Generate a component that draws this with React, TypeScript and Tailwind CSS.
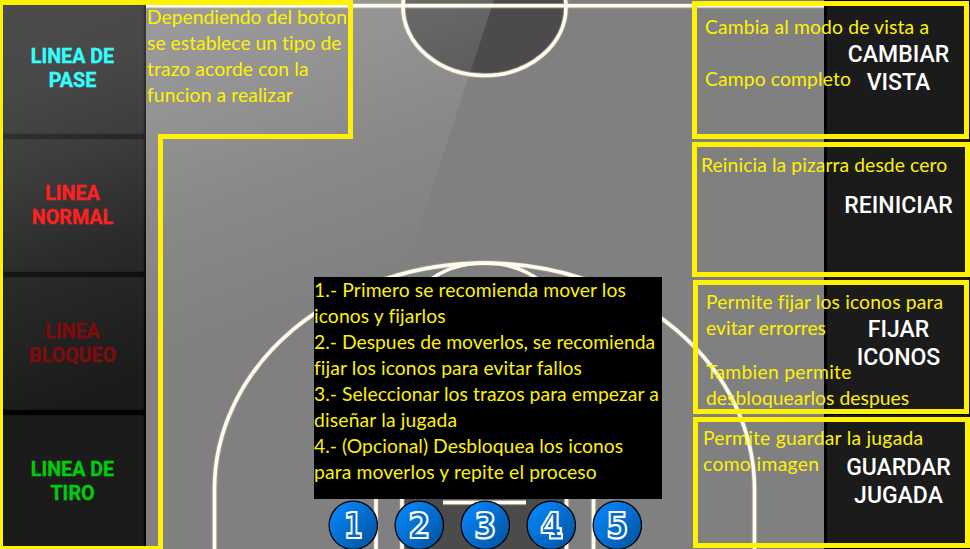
import React from "react";

const ROBOTO = "font-['Roboto',sans-serif]";

const modes = [
  { lines: ["LINEA DE", "PASE"], color: "text-[#33ffff]" },
  { lines: ["LINEA", "NORMAL"], color: "text-[#ff2020]" },
  { lines: ["LINEA", "BLOQUEO"], color: "text-[#7e0c0e]" },
  { lines: ["LINEA DE", "TIRO"], color: "text-[#00cc0a]" },
];

const actions = [
  ["CAMBIAR", "VISTA"],
  ["REINICIAR"],
  ["FIJAR", "ICONOS"],
  ["GUARDAR", "JUGADA"],
];

const ARC = "M214.500 549V489A270 226 0 0 1 754.500 489V549";
const KEY = "M376 497V549M402 497V549M566.500 497V549M593.500 497V549M443 502.500H526";

function Court() {
  return (
    <svg className="absolute inset-0" width="970" height="549" viewBox="0 0 970 549" fill="none">
      <ellipse cx="484.500" cy="7" rx="81.500" ry="68.500" fill="#4b4b4b" />
      <rect x="402" y="497" width="165" height="52" fill="#4b4b4b" />
      <g stroke="#b5ac98" strokeWidth="5.500" opacity="0.6">
        <path d="M146 5.700H824" />
        <ellipse cx="484.500" cy="7" rx="81.500" ry="68.500" />
        <path d={ARC} />
        <path d={KEY} />
      </g>
      <g stroke="#fffbee" strokeWidth="3.600">
        <path d="M146 5.700H824" />
        <ellipse cx="484.500" cy="7" rx="81.500" ry="68.500" />
        <path d={ARC} />
        <ellipse cx="484.500" cy="330" rx="82" ry="67" />
        <path d={KEY} />
      </g>
    </svg>
  );
}

function Note({ at, lines }: { at: string; lines: [string, string][] }) {
  return (
    <div className={`absolute font-['Lato',sans-serif] text-[19.3px] leading-[26px] whitespace-nowrap text-[#fff200] [font-variant-ligatures:none] ${at}`}>
      {lines.map(([text, track], i) => (
        <div key={i} className={`h-[26px] ${track}`}>{text}</div>
      ))}
    </div>
  );
}

function Player({ n }: { n: number }) {
  return (
    <svg width="50" height="50" viewBox="0 0 50 50">
      <defs>
        <linearGradient id={`ball${n}`} x1="0" y1="0" x2="1" y2="1">
          <stop offset="0.150" stopColor="#0783f6" />
          <stop offset="0.850" stopColor="#0258a8" />
        </linearGradient>
      </defs>
      <circle cx="25.300" cy="25.300" r="24.200" fill={`url(#ball${n})`} stroke="#000" strokeWidth="1.300" />
      <text x="25.300" y="38.200" textAnchor="middle" fontFamily="DejaVu Sans" fontWeight="700" fontSize="35" textLength={n === 1 ? 19 : 22} lengthAdjust="spacingAndGlyphs" fill="#0468c6" stroke="#fff" strokeWidth="2.200">
        {n}
      </text>
      {n === 4 && (
        <>
          <rect x="24" y="34" width="12" height="4.500" fill="#0468c6" stroke="#fff" strokeWidth="2" />
          <rect x="28.800" y="31.500" width="2.400" height="4" fill="#0468c6" />
        </>
      )}
    </svg>
  );
}

export default function App() {
  return (
    <div className="relative flex h-[549px] w-[970px] justify-between overflow-hidden bg-[#808080]">
      <Court />
      <nav className={`relative flex w-[146px] flex-col bg-[#030303] pt-[5px] ${ROBOTO}`}>
        {modes.map((m, i) => (
          <div key={i} className={`mb-[5px] ml-[3px] mr-[2px] flex shrink-0 flex-col items-center justify-center rounded-[2px] border border-[#161616] bg-[#1b1b1b] pr-[2px] text-[19.7px] leading-[23.7px] font-bold [-webkit-text-stroke:0.35px_currentColor] ${i === 0 ? "h-[129px] pb-[1px]" : "h-[133px] pt-[1px]"} ${m.color}`}>
            {m.lines.map((l) => <span key={l} className="relative z-10">{l}</span>)}
          </div>
        ))}
      </nav>
      <aside className={`relative flex w-[146px] flex-col bg-black pt-[5px] pl-[3px] ${ROBOTO}`}>
        {actions.map((a, i) => (
          <div key={i} className={`mb-[5px] flex shrink-0 flex-col items-center justify-center rounded-[2px] bg-[#1b1b1b] text-[23px] leading-[27.5px] font-medium text-white ${i === 0 ? "h-[129px] pb-[2px]" : "h-[133px]"}`}>
            {a.map((l) => <span key={l}>{l}</span>)}
          </div>
        ))}
      </aside>
      <div className="absolute inset-0 bg-[linear-gradient(160deg,rgba(255,255,255,0.21)_0%,rgba(255,255,255,0.2)_10%,rgba(255,255,255,0.15)_20%,rgba(255,255,255,0.07)_31%,rgba(255,255,255,0)_47%)] [clip-path:polygon(0_0,494px_0,314px_549px,0_549px)]" />

      <div className="absolute top-[277px] left-[314px] h-[222px] w-[348px] bg-black" />
      <div className="absolute top-[500px] left-[328px] flex gap-[16px]">
        {[1, 2, 3, 4, 5].map((n) => <Player key={n} n={n} />)}
      </div>

      <svg className="absolute inset-0" width="970" height="549" fill="none" stroke="#fff200" strokeWidth="5">
        <path d="M.500 2.500H350.500V136.500H160.500V548.500H.500Z" />
        <path d="M694.500 3.500H966.500V136.500H694.500Z" />
        <path d="M694.500 144.500H967.500V274.500H694.500Z" />
        <path d="M695.500 282.500H966.500V411.500H695.500Z" />
        <path d="M695.500 419.500H967.500V545.500H695.500Z" />
      </svg>

      <Note at="left-[147px] top-[4px]" lines={[["Dependiendo del boton", ""], ["se establece un tipo de", "tracking-[0.03px]"], ["trazo acorde con la", "tracking-[0.1px]"], ["funcion a realizar", "tracking-[0.1px]"]]} />
      <Note at="left-[314px] top-[277px]" lines={[
        ["1.- Primero se recomienda mover los", "tracking-[0.11px]"],
        ["iconos y fijarlos", "tracking-[0.1px]"],
        ["2.- Despues de moverlos, se recomienda", "tracking-[0.02px]"],
        ["fijar los iconos para evitar fallos", "tracking-[0.1px]"],
        ["3.- Seleccionar los trazos para empezar a", "tracking-[0.07px]"],
        ["diseñar la jugada", "tracking-[0.17px]"],
        ["4.- (Opcional) Desbloquea los iconos", "tracking-[0.05px]"],
        ["para moverlos y repite el proceso", "tracking-[0.13px]"],
      ]} />
      <Note at="left-[705px] top-[14px]" lines={[["Cambia al modo de vista a", "tracking-[0.16px]"], ["", ""], ["Campo completo", "tracking-[0.14px]"]]} />
      <Note at="left-[701px] top-[152px]" lines={[["Reinicia la pizarra desde cero", "tracking-[0.1px]"]]} />
      <Note at="left-[706px] top-[289px]" lines={[["Permite fijar los iconos para", "tracking-[0.14px]"], ["evitar errorres", "tracking-[0.03px]"]]} />
      <Note at="left-[706px] top-[359px]" lines={[["Tambien permite", "tracking-[0.28px]"], ["desbloquearlos despues", "tracking-[0.05px]"]]} />
      <Note at="left-[703px] top-[425px]" lines={[["Permite guardar la jugada", "tracking-[0.25px]"], ["como imagen", "tracking-[0.35px]"]]} />
    </div>
  );
}
